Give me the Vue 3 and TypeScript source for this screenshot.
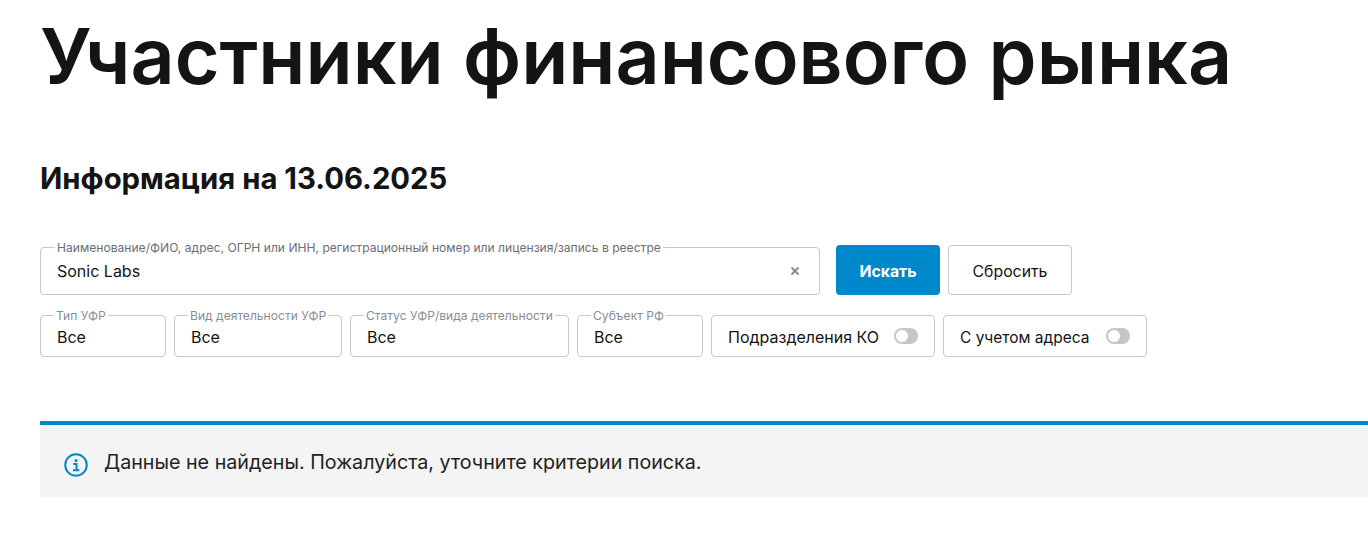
<script setup lang="ts">
const filters = [
  { label: 'Тип УФР', cls: 'f1' },
  { label: 'Вид деятельности УФР', cls: 'f2' },
  { label: 'Статус УФР/вида деятельности', cls: 'f3' },
  { label: 'Субъект РФ', cls: 'f4' },
]
const toggles = [
  { label: 'Подразделения КО', cls: 't1' },
  { label: 'С учетом адреса', cls: 't2' },
]
</script>

<template>
  <main class="page">
    <h1 class="title">Участники финансового рынка</h1>
    <h2 class="sub">Информация на 13.06.2025</h2>
    <div class="search">
      <div class="field main-field">
        <span class="legend dark">Наименование/ФИО, адрес, ОГРН или ИНН, регистрационный номер или лицензия/запись в реестре</span>
        <span class="value">Sonic Labs</span>
        <svg class="clear" width="10" height="10" viewBox="0 0 10 10" fill="none">
          <path d="M1.5 1.5l7 7M8.5 1.5l-7 7" stroke="#8a8d94" stroke-width="2" />
        </svg>
      </div>
      <button class="btn primary">Искать</button>
      <button class="btn secondary">Сбросить</button>
    </div>
    <div class="filters">
      <div v-for="f in filters" :key="f.label" class="field small" :class="f.cls">
        <span class="legend">{{ f.label }}</span>
        <span class="value">Все</span>
      </div>
      <div v-for="t in toggles" :key="t.label" class="toggle" :class="t.cls">
        <span class="toggle-label">{{ t.label }}</span>
        <span class="switch"><span class="knob"></span></span>
      </div>
    </div>
    <div class="notice">
      <svg class="icon" width="24" height="24" viewBox="0 0 24 24" fill="none">
        <circle cx="12" cy="12" r="10.75" stroke="#0088cc" stroke-width="2" />
        <circle cx="12" cy="7.4" r="1.5" fill="#0088cc" />
        <path d="M9.3 11h3.2v6M9 17.2h6.4" stroke="#0088cc" stroke-width="2" />
      </svg>
      <span class="notice-text">Данные не найдены. Пожалуйста, уточните критерии поиска.</span>
    </div>
  </main>
</template>

<style>
body { background: #fff; }
</style>

<style scoped>
.page {
  padding-left: 40px;
  font-family: Inter, "Noto Sans", sans-serif;
  color: #141414;
  height: 537px;
  overflow: hidden;
  box-sizing: border-box;
}
.title {
  margin: 0;
  padding-top: 12px;
  font-size: 77px;
  line-height: 88px;
  font-weight: 600;
  white-space: nowrap;
}
.sub {
  margin: 60px 0 0;
  font-size: 29.3px;
  line-height: 38px;
  font-weight: 700;
}
.search {
  display: flex;
  margin-top: 47px;
  align-items: flex-start;
}
.field {
  position: relative;
  box-sizing: border-box;
  border: 1px solid #c8c9cc;
  border-radius: 4px;
  display: flex;
  align-items: center;
  padding-left: 16px;
  background: #fff;
  font-size: 16px;
}
.main-field {
  width: 780px;
  height: 48px;
  margin-top: 2px;
}
.legend {
  position: absolute;
  top: -7px;
  left: 13px;
  padding: 0 2px;
  background: #fff;
  font-size: 12.1px;
  line-height: 13px;
  color: #8a8d94;
  white-space: nowrap;
}
.legend.dark { left: 14px; color: #6b6e75; }
.value { padding-top: 2px; }
.main-field .value { padding-top: 0; }
.clear {
  position: absolute;
  right: 19px;
  top: 18px;
}
.btn {
  box-sizing: border-box;
  height: 50px;
  padding: 2px 0 0;
  border-radius: 4px;
  font-family: inherit;
  font-size: 15.8px;
}
.primary {
  margin-left: 16px;
  width: 104px;
  border: none;
  background: #0088cc;
  color: #fff;
  font-weight: 700;
}
.secondary {
  margin-left: 8px;
  width: 124px;
  border: 1px solid #c8c9cc;
  background: #fff;
  color: #141414;
}
.filters {
  display: flex;
  gap: 8px;
  margin-top: 20px;
}
.small { height: 42px; }
.f1, .f4 { width: 126px; }
.f2 { width: 168px; }
.f3 { width: 219px; }
.toggle {
  box-sizing: border-box;
  height: 42px;
  border: 1px solid #c8c9cc;
  border-radius: 4px;
  display: flex;
  align-items: center;
  justify-content: space-between;
  padding: 0 16px;
  font-size: 16px;
}
.toggle-label { padding-top: 2px; }
.t2 .toggle-label { font-size: 15.5px; }
.t1 { width: 224px; }
.t2 { width: 204px; }
.switch {
  width: 24px;
  height: 16px;
  border-radius: 8px;
  background: #c4c6ca;
  display: flex;
  align-items: center;
  padding-left: 2px;
  box-sizing: border-box;
}
.knob {
  width: 12px;
  height: 12px;
  border-radius: 50%;
  background: #fff;
}
.notice {
  margin-top: 64px;
  height: 76px;
  box-sizing: border-box;
  border-top: 4px solid #0088cc;
  background: #f4f4f4;
  display: flex;
  align-items: center;
  padding-left: 24px;
  gap: 16px;
  font-size: 19.7px;
  color: #222;
}
.notice-text { padding-top: 2px; }
.icon { flex: none; margin-top: 8px; }
</style>
